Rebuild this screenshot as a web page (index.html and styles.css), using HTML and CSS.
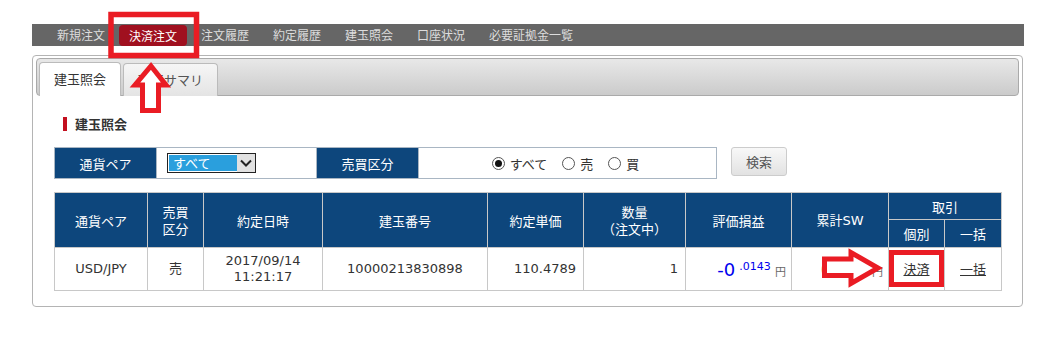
FILE: index.html
```html
<!DOCTYPE html>
<html lang="ja">
<head>
<meta charset="utf-8">
<title>建玉照会</title>
<link rel="stylesheet" href="styles.css">
</head>
<body>
  <div class="page">
    <!-- global menu -->
    <div class="gnav">
      <a href="#">新規注文</a>
      <a href="#" class="active">決済注文</a>
      <a href="#">注文履歴</a>
      <a href="#">約定履歴</a>
      <a href="#">建玉照会</a>
      <a href="#">口座状況</a>
      <a href="#">必要証拠金一覧</a>
    </div>

    <div class="panel">
      <div class="tabbar">
        <div class="tab tab-on">建玉照会</div>
        <div class="tab">建玉サマリ</div>
      </div>

      <div class="content">
        <h2 class="heading">建玉照会</h2>

        <!-- search conditions -->
        <div class="search-row">
          <div class="filter">
            <div class="flabel">通貨ペア</div>
            <div class="fvalue fvalue-pair">
              <div class="select">
                <span class="select-val">すべて</span>
                <span class="select-arrow">
                  <svg width="12" height="8" viewBox="0 0 12 8"><path d="M1 1.5 L6 6.5 L11 1.5" fill="none" stroke="#222" stroke-width="2"/></svg>
                </span>
              </div>
            </div>
            <div class="flabel">売買区分</div>
            <div class="fvalue fvalue-side">
              <label class="radio"><span class="dot checked"></span>すべて</label>
              <label class="radio"><span class="dot"></span>売</label>
              <label class="radio"><span class="dot"></span>買</label>
            </div>
          </div>
          <button class="btn">検索</button>
        </div>

        <!-- positions -->
        <table class="grid">
          <colgroup>
            <col style="width:93px"><col style="width:56px"><col style="width:119px"><col style="width:165px"><col style="width:96px">
            <col style="width:102px"><col style="width:106px"><col style="width:97px"><col style="width:56px"><col style="width:57px">
          </colgroup>
          <tr class="h1">
            <th rowspan="2">通貨ペア</th>
            <th rowspan="2">売買<br>区分</th>
            <th rowspan="2">約定日時</th>
            <th rowspan="2">建玉番号</th>
            <th rowspan="2">約定単価</th>
            <th rowspan="2">数量<br>（注文中）</th>
            <th rowspan="2">評価損益</th>
            <th rowspan="2">累計<span class="lat">SW</span></th>
            <th colspan="2">取引</th>
          </tr>
          <tr class="h2">
            <th>個別</th>
            <th>一括</th>
          </tr>
          <tr class="row">
            <td>USD/JPY</td>
            <td>売</td>
            <td>2017/09/14<br>11:21:17</td>
            <td>10000213830898</td>
            <td class="num">110.4789</td>
            <td class="num">1</td>
            <td class="num pl"><span class="big">-0</span> <span class="dec">.0143</span> <span class="yen">円</span></td>
            <td class="num pl"><span class="sw">0</span> <span class="dec sw-dec">.0000</span> <span class="yen">円</span></td>
            <td><a href="#">決済</a></td>
            <td><a href="#">一括</a></td>
          </tr>
        </table>
      </div>
    </div>
  </div>

  <!-- annotation marks drawn over the screen -->
  <svg class="marks" width="1061" height="347" viewBox="0 0 1061 347">
    <rect x="111" y="14.5" width="85.5" height="41" fill="none" stroke="#ea1c24" stroke-width="5.5"/>
    <polygon points="151,66 166,85 158.5,85 158.5,110.5 142.5,110.5 142.5,85 135,85" fill="#fff" stroke="#ea1c24" stroke-width="5" stroke-linejoin="miter"/>
    <polygon points="824.5,259 851,259 851,252.5 878,268 851,283.5 851,275.5 824.5,275.5" fill="#fff" stroke="#ea1c24" stroke-width="5" stroke-linejoin="miter"/>
    <rect x="891.5" y="252.5" width="50" height="32" fill="none" stroke="#ea1c24" stroke-width="5"/>
  </svg>
</body>
</html>
```

FILE: styles.css
```css
body {
  margin: 0;
  font-family: "DejaVu Sans", "Noto Sans CJK JP", sans-serif;
  color: #333;
  background-color: #ffffff;
}

.page {
  width: 992px;
  padding: 24px 0 0 32px;
}

/* global menu */
.gnav {
  display: flex;
  height: 22px;
  padding-left: 13px;
  background-color: #666666;
}

.gnav a {
  margin: 0 2px;
  padding: 0 10px;
  font-family: "Noto Sans CJK JP", sans-serif;
  font-size: 12px;
  line-height: 22px;
  color: #dddddd;
  text-decoration: none;
}

.gnav a.active {
  margin-top: 1px;
  line-height: 21px;
  background-color: #a0101f;
  border-radius: 4px;
  color: #ffffff;
}

/* panel */
.panel {
  width: 991px;
  box-sizing: border-box;
  margin-top: 9px;
  padding: 2px 3px 15px;
  border: 1px solid #b4b4b4;
  border-radius: 4px;
}

.tabbar {
  display: flex;
  align-items: flex-end;
  height: 36px;
  padding-left: 2px;
  border: 1px solid #aaaaaa;
  border-radius: 4px;
  background: linear-gradient(#e8e8e8, #cbcbcb);
}

.tab {
  height: 32px;
  margin-bottom: -1px;
  margin-right: 2px;
  padding: 0 14px;
  border: 1px solid #bbbbbb;
  border-bottom: none;
  border-radius: 4px 4px 0 0;
  background: linear-gradient(#f6f6f6, #e4e4e4);
  font-family: "Noto Sans CJK JP", sans-serif;
  font-size: 13px;
  line-height: 32px;
  color: #555555;
}

.tab-on {
  height: 33px;
  background: #ffffff;
  color: #333333;
}

.content {
  padding: 0 18px;
}

.heading {
  margin: 21px 0 16px;
  padding-left: 9px;
  display: flex;
  align-items: center;
  height: 14px;
  font-family: "Noto Sans CJK JP", sans-serif;
  font-size: 13px;
  font-weight: bold;
  line-height: 14px;
  color: #333333;
}

.heading::before {
  content: "";
  width: 4px;
  height: 14px;
  margin-right: 8px;
  background-color: #c3101f;
}

/* search conditions */
.search-row {
  display: flex;
  align-items: flex-start;
}

.filter {
  display: flex;
  height: 30px;
  border: 1px solid #a9b6c3;
}

.flabel {
  width: 101px;
  display: flex;
  align-items: center;
  justify-content: center;
  background-color: #0d467c;
  color: #ffffff;
  font-family: "Noto Sans CJK JP", sans-serif;
  font-size: 13px;
}

.fvalue {
  display: flex;
  align-items: center;
  border-left: 1px solid #a9b6c3;
  border-right: 1px solid #a9b6c3;
}

.fvalue-pair {
  width: 149px;
  padding-left: 10px;
}

.fvalue-side {
  width: 293px;
  justify-content: center;
  gap: 15px;
  border-right: none;
  padding-right: 4px;
}

.select {
  display: flex;
  width: 89px;
  height: 20px;
  box-sizing: border-box;
  border: 1px solid #222222;
  background-color: #ffffff;
}

.select-val {
  flex: 1;
  margin: 1px 0 1px 1px;
  padding-left: 4px;
  background-color: #2a9fdd;
  color: #ffffff;
  font-family: "Noto Sans CJK JP", sans-serif;
  font-size: 13px;
  line-height: 16px;
}

.select-arrow {
  width: 18px;
  display: flex;
  align-items: center;
  justify-content: center;
  background-color: #e1e1e1;
}

.radio {
  display: flex;
  align-items: center;
  font-family: "Noto Sans CJK JP", sans-serif;
  font-size: 13px;
  color: #333333;
}

.dot {
  width: 11px;
  height: 11px;
  margin-right: 5px;
  border: 1px solid #555555;
  border-radius: 50%;
  display: flex;
  align-items: center;
  justify-content: center;
}

.dot.checked::after {
  content: "";
  width: 7px;
  height: 7px;
  border-radius: 50%;
  background-color: #111111;
}

.btn {
  margin-left: 14px;
  width: 56px;
  height: 29px;
  border: 1px solid #cccccc;
  border-radius: 3px;
  background: linear-gradient(#f8f8f8, #e2e2e2);
  font-family: "Noto Sans CJK JP", sans-serif;
  font-size: 13px;
  color: #555555;
  padding: 0;
}

/* positions table */
.grid {
  margin-top: 13px;
  width: 947px;
  table-layout: fixed;
  border-collapse: collapse;
}

.grid th,
.grid td {
  border: 1px solid #c8c8c8;
  padding: 0;
  text-align: center;
  font-size: 13px;
  line-height: 16px;
}

.grid th {
  background-color: #0d467c;
  color: #ffffff;
  font-family: "Noto Sans CJK JP", sans-serif;
  font-weight: normal;
  line-height: 17px;
}

.grid th .lat {
  font-family: "DejaVu Sans", sans-serif;
}

.grid tr.h1 {
  height: 27px;
}

.grid tr.h2 {
  height: 28px;
}

.grid tr.row {
  height: 43px;
}

.grid td.num {
  text-align: right;
  padding-right: 7px;
}

.grid td.pl {
  padding-right: 5px;
}

.big {
  font-size: 18px;
  color: #0000ee;
}

.dec {
  font-size: 11px;
  color: #0000ee;
  vertical-align: 6px;
}

.sw {
  font-size: 18px;
  color: #333333;
}

.sw-dec {
  color: #333333;
}

.yen {
  font-family: "Noto Sans CJK JP", sans-serif;
  font-size: 11px;
  color: #666666;
}

.grid a {
  color: #333333;
  font-family: "Noto Sans CJK JP", sans-serif;
}

.marks {
  position: absolute;
  top: 0;
  left: 0;
  pointer-events: none;
}
```
